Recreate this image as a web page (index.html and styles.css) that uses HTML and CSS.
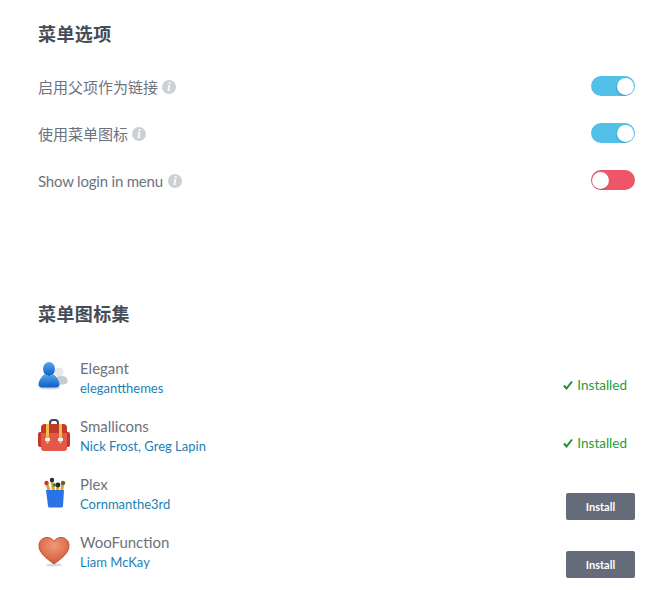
FILE: index.html
```html
<!DOCTYPE html>
<html lang="en">

<head>
    <meta charset="UTF-8">
    <meta name="viewport" content="width=device-width, initial-scale=1.0">
    <title>菜单选项</title>
    <link rel="stylesheet" href="styles.css">
</head>

<body>
    <h2 class="section-title">菜单选项</h2>

    <div class="options">
        <div class="option">
            <span class="option-label">启用父项作为链接 <span class="info">i</span></span>
            <span class="toggle on"><span class="knob"></span></span>
        </div>
        <div class="option">
            <span class="option-label">使用菜单图标 <span class="info">i</span></span>
            <span class="toggle on"><span class="knob"></span></span>
        </div>
        <div class="option">
            <span class="option-label latin">Show login in menu <span class="info">i</span></span>
            <span class="toggle off"><span class="knob"></span></span>
        </div>
    </div>

    <h2 class="section-title packs-title">菜单图标集</h2>

    <div class="packs">
        <div class="pack">
            <svg class="pack-icon" viewBox="0 0 32 32">
                <defs>
                    <linearGradient id="blueUser" x1="0" y1="0" x2="0" y2="1">
                        <stop offset="0" stop-color="#5aa5e8"/>
                        <stop offset="1" stop-color="#0a60c8"/>
                    </linearGradient>
                </defs>
                <circle cx="21" cy="11" r="4.500" fill="#e6e8ea"/>
                <path d="M18 16c3-1.500 8-1.500 10 0 2 2 2 5 1 6-2 2-8 2-11 0z" fill="#c9cccf"/>
                <ellipse cx="12" cy="27" rx="11" ry="1.500" fill="#d5d8dc"/>
                <ellipse cx="11" cy="8" rx="6" ry="7" fill="url(#blueUser)"/>
                <path d="M7 13c-3 2-6 6-6.500 10-.3 2 1 3.500 4 3.500h13c3 0 4.500-1.500 4-3.500-.5-4-3.500-8-6.500-10-2 2.500-6 2.500-8 0z" fill="url(#blueUser)"/>
            </svg>
            <div class="pack-text">
                <div class="pack-name">Elegant</div>
                <a class="pack-author">elegantthemes</a>
            </div>
            <span class="installed">
                <svg class="check" viewBox="0 0 10 10"><path d="M1 5.500l2.500 3L9 1.500" fill="none" stroke="#1f8f30" stroke-width="2"/></svg>
                Installed
            </span>
        </div>
        <div class="pack">
            <svg class="pack-icon" viewBox="0 0 32 32">
                <path d="M12 6V4a3 3 0 0 1 3-3h2a3 3 0 0 1 3 3v2" fill="none" stroke="#34495e" stroke-width="2"/>
                <rect x="0" y="13" width="5" height="15" rx="2" fill="#c0392b"/>
                <rect x="27" y="13" width="5" height="15" rx="2" fill="#c0392b"/>
                <path d="M3 9a4 4 0 0 1 4-4h18a4 4 0 0 1 4 4v5H3z" fill="#c0392b"/>
                <path d="M3 14h26v15a3 3 0 0 1-3 3H6a3 3 0 0 1-3-3z" fill="#e5574a"/>
                <path d="M8 5h3v18l-1.500 2L8 23z" fill="#f0c040"/>
                <path d="M21 5h3v18l-1.500 2-1.500-2z" fill="#f0c040"/>
                <rect x="7" y="19" width="5" height="3" fill="#ecf0f1"/>
                <rect x="20" y="19" width="5" height="3" fill="#ecf0f1"/>
            </svg>
            <div class="pack-text">
                <div class="pack-name">Smallicons</div>
                <a class="pack-author">Nick Frost, Greg Lapin</a>
            </div>
            <span class="installed">
                <svg class="check" viewBox="0 0 10 10"><path d="M1 5.500l2.500 3L9 1.500" fill="none" stroke="#1f8f30" stroke-width="2"/></svg>
                Installed
            </span>
        </div>
        <div class="pack">
            <svg class="pack-icon" viewBox="0 0 32 32">
                <path d="M9 7l3 10M14 4l2 13M20 8l-1 9M25 6l-2 11" stroke="#e0a52a" stroke-width="3" fill="none"/>
                <circle cx="8.500" cy="6" r="2.200" fill="#c0392b"/>
                <circle cx="14" cy="3" r="2.200" fill="#1d2b4f"/>
                <circle cx="20" cy="8" r="2.400" fill="#1c2a33"/>
                <circle cx="16.500" cy="8" r="1.800" fill="#2e8b3d"/>
                <circle cx="25" cy="6" r="2.200" fill="#7a5a20"/>
                <path d="M8 13h18l-1 16c-.1 1-1 1.500-2 1.500H12c-1 0-2-.5-2-1.500z" fill="#2b72e8"/>
            </svg>
            <div class="pack-text">
                <div class="pack-name">Plex</div>
                <a class="pack-author">Cornmanthe3rd</a>
            </div>
            <button class="install-btn">Install</button>
        </div>
        <div class="pack">
            <svg class="pack-icon" viewBox="0 0 32 32">
                <defs>
                    <radialGradient id="heartFill" cx="0.5" cy="0.3" r="0.8">
                        <stop offset="0" stop-color="#ee9a78"/>
                        <stop offset="1" stop-color="#cf4f33"/>
                    </radialGradient>
                </defs>
                <ellipse cx="16" cy="30" rx="8" ry="1.500" fill="#d5d8dc"/>
                <path d="M16 29C8 23 1 18 1 10.500 1 5.500 5 2.500 9 2.500c3 0 5.500 1.500 7 4 1.500-2.500 4-4 7-4 4 0 8 3 8 8C31 18 24 23 16 29z" fill="url(#heartFill)" stroke="#c94a30" stroke-width="1"/>
            </svg>
            <div class="pack-text">
                <div class="pack-name">WooFunction</div>
                <a class="pack-author">Liam McKay</a>
            </div>
            <button class="install-btn">Install</button>
        </div>
    </div>
</body>

</html>
```

FILE: styles.css
```css
body {
    font-family: Lato, "Noto Sans CJK SC", sans-serif;
    background-color: #fff;
    color: #6c7380;
    margin: 0;
    padding: 23px 33px 0 38px;
}

.section-title {
    margin: 0;
    font-size: 18px;
    line-height: 22px;
    font-weight: 700;
    color: #454b57;
    letter-spacing: 0.4px;
}

.options {
    margin-top: 18px;
}

.option {
    display: flex;
    align-items: center;
    justify-content: space-between;
    height: 47px;
}

.option-label {
    font-size: 15px;
    display: flex;
    align-items: center;
    gap: 4px;
}

.option-label.latin {
    letter-spacing: -0.2px;
    gap: 5px;
}

.info {
    display: inline-block;
    width: 14px;
    height: 14px;
    border-radius: 50%;
    background-color: #cdd1d6;
    color: #fff;
    font-family: "Liberation Serif", serif;
    font-style: italic;
    font-weight: 700;
    font-size: 12px;
    line-height: 14px;
    text-align: center;
    letter-spacing: 0;
}

.toggle {
    display: flex;
    align-items: center;
    width: 44px;
    height: 20px;
    margin-bottom: 1px;
    border-radius: 10px;
    padding: 0 1px;
    box-sizing: border-box;
}

.toggle.on {
    background-color: #52c0e8;
    justify-content: flex-end;
}

.toggle.off {
    background-color: #ee5568;
}

.knob {
    width: 17px;
    height: 17px;
    border-radius: 50%;
    background-color: #fff;
    box-shadow: -1px 1px 1px rgba(0, 0, 0, 0.15);
}

.toggle.off .knob {
    box-shadow: 0 1px 1px rgba(0, 0, 0, 0.2);
}

.packs-title {
    margin-top: 99px;
}

.packs {
    margin-top: 23px;
}

.pack {
    display: flex;
    align-items: center;
    height: 58px;
}

.pack-icon {
    width: 32px;
    height: 32px;
    margin-right: 10px;
    flex-shrink: 0;
}

.pack-text {
    flex: 1;
}

.pack-name {
    font-size: 15px;
    line-height: 22px;
}

.pack-author {
    display: block;
    font-size: 13px;
    line-height: 18px;
    color: #1b7fb5;
}

.installed {
    display: flex;
    align-items: center;
    gap: 4px;
    font-size: 13.5px;
    color: #2a9a3c;
    margin: 16px 8px 0 0;
}

.check {
    width: 10px;
    height: 10px;
}

.install-btn {
    width: 69px;
    height: 27px;
    margin-top: 26px;
    border: none;
    border-radius: 2px;
    background-color: #656c79;
    color: #fff;
    font-family: Lato, sans-serif;
    font-size: 11px;
    font-weight: 700;
}
```
